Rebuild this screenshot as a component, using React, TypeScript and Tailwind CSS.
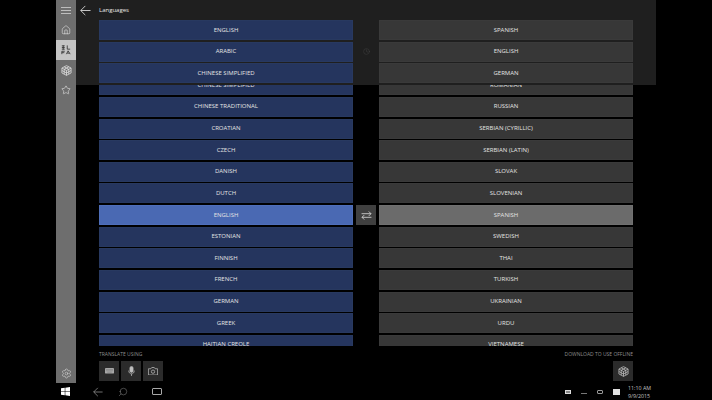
import { Clock, Home, Search, Settings, Star } from 'lucide-react';

const sourceLanguages = [
  'CHINESE SIMPLIFIED',
  'CHINESE TRADITIONAL',
  'CROATIAN',
  'CZECH',
  'DANISH',
  'DUTCH',
  'ENGLISH',
  'ESTONIAN',
  'FINNISH',
  'FRENCH',
  'GERMAN',
  'GREEK',
  'HAITIAN CREOLE',
];

const targetLanguages = [
  'ROMANIAN',
  'RUSSIAN',
  'SERBIAN (CYRILLIC)',
  'SERBIAN (LATIN)',
  'SLOVAK',
  'SLOVENIAN',
  'SPANISH',
  'SWEDISH',
  'THAI',
  'TURKISH',
  'UKRAINIAN',
  'URDU',
  'VIETNAMESE',
];

function LanguageRow({
  label,
  side,
  selected = false,
}: {
  label: string;
  side: 'source' | 'target';
  selected?: boolean;
}) {
  let tone = 'bg-[#25355e] border-[#283960]';
  if (side === 'target') tone = 'bg-[#373737] border-[#3a3a3a]';
  if (side === 'source' && selected) tone = 'bg-[#4a69b3] border-[#4f6fba]';
  if (side === 'target' && selected) tone = 'bg-[#6b6b6b] border-[#707070]';

  return (
    <div
      className={`flex h-5 w-[254px] shrink-0 items-center justify-center border text-[6px] text-[#e4e4e4] ${tone}`}
    >
      {label}
    </div>
  );
}

function LanguageList({
  items,
  side,
  selectedItem,
}: {
  items: string[];
  side: 'source' | 'target';
  selectedItem: string;
}) {
  return (
    <div className="flex flex-col gap-[1.64px]">
      {items.map((item) => (
        <LanguageRow
          key={item}
          label={item}
          side={side}
          selected={item === selectedItem}
        />
      ))}
    </div>
  );
}

function TranslateGlyph() {
  return (
    <svg viewBox="0 0 12 12" className="h-[10px] w-[10px] text-[#333]" fill="none" stroke="currentColor" strokeWidth="1">
      <path d="M1 1h3.500M1 3h3.500M1 5h3.500M2.700.500v5M7.500.500v4.500h3.500M1 11V7.500h3.500M1 9.200h3M6.500 11 8.500 7l2.500 4M7.500 9.800h2.500" />
    </svg>
  );
}

function CubeGlyph({ size = 11 }: { size?: number }) {
  return (
    <svg viewBox="0 0 12 12" width={size} height={size} fill="none" stroke="currentColor" strokeWidth="0.800">
      <path d="M6 .700 11 3.300v5.400L6 11.300 1 8.700V3.300zM1 3.300 6 6l5-2.700M6 6v5.300M3.500 2 8.500 4.700v5.300M8.500 2 3.500 4.700v5.300M1 6l5 2.700L11 6" />
    </svg>
  );
}

function BackArrow({ size, strokeWidth }: { size: number; strokeWidth: number }) {
  return (
    <svg viewBox="0 0 12 12" width={size} height={size} fill="none" stroke="currentColor" strokeWidth={strokeWidth}>
      <path d="M11.500 6H.800M5.800 1 .800 6l5 5" />
    </svg>
  );
}

function SwapGlyph() {
  return (
    <svg viewBox="0 0 12 10" width="11" height="9" fill="none" stroke="currentColor" strokeWidth="0.900">
      <path d="M.500 3h10.500M8.500.500 11 3 8.500 5.500M11.500 7H1M3.500 4.500 1 7l2.500 2.500" />
    </svg>
  );
}

function KeyboardGlyph() {
  return (
    <svg viewBox="0 0 10 6" width="9" height="5.500">
      <rect width="10" height="6" rx="0.500" fill="#a8a8a8" />
      <path d="M1 1.500h8M1 3h8M2.500 4.600h5" stroke="#6e6e6e" strokeWidth="0.500" />
    </svg>
  );
}

function MicGlyph() {
  return (
    <svg viewBox="0 0 8 12" width="7" height="10.500" fill="none" stroke="#bdbdbd" strokeWidth="0.800">
      <rect x="2.200" y="0.500" width="3.600" height="6.800" rx="1.800" fill="#bdbdbd" />
      <path d="M.800 5.200c0 5 6.400 5 6.400 0M4 9v2.500" />
    </svg>
  );
}

function CameraGlyph() {
  return (
    <svg viewBox="0 0 12 10" width="10" height="8.500" fill="none" stroke="#bdbdbd" strokeWidth="0.900">
      <path d="M.500 2h3l1-1.500h3l1 1.500h3v7.500H.500z" />
      <circle cx="6" cy="5.500" r="2" />
    </svg>
  );
}

function WindowsLogo() {
  return (
    <svg viewBox="0 0 10 10" className="h-[9px] w-[9px] fill-white">
      <path d="M0 1.400 4.200.800v3.900H0zM4.800.700 10 0v4.700H4.800zM0 5.300h4.200v3.900L0 8.600zM4.800 5.300H10V10l-5.200-.700z" />
    </svg>
  );
}

function SideButton({ children, active = false }: { children: React.ReactNode; active?: boolean }) {
  return (
    <div className={`flex h-5 w-5 items-center justify-center ${active ? 'bg-[#c4c4c4]' : ''}`}>
      {children}
    </div>
  );
}

function ToolButton({ children }: { children: React.ReactNode }) {
  return <div className="flex h-5 w-5 items-center justify-center bg-[#2b2b2b] text-[#c8c8c8]">{children}</div>;
}

export default function App() {
  return (
    <div className="flex h-[400px] w-[712px] flex-col overflow-hidden bg-black font-['Open_Sans',sans-serif]">
      <div className="flex h-[383px] pl-14">
        <aside className="flex w-5 flex-col justify-between bg-[#6e6e6e] text-[#e8e8e8]">
          <div className="flex flex-col">
            <SideButton>
              <div className="flex w-[10px] flex-col gap-[2px]">
                <div className="h-px bg-[#bdbdbd]" />
                <div className="h-px bg-[#bdbdbd]" />
                <div className="h-px bg-[#bdbdbd]" />
              </div>
            </SideButton>
            <SideButton>
              <Home size={10} strokeWidth={1.400} />
            </SideButton>
            <SideButton active>
              <TranslateGlyph />
            </SideButton>
            <SideButton>
              <CubeGlyph />
            </SideButton>
            <SideButton>
              <Star size={10} strokeWidth={1.400} />
            </SideButton>
          </div>
          <SideButton>
            <Settings size={11} strokeWidth={1.100} />
          </SideButton>
        </aside>

        <main className="relative flex w-[580px] flex-col">
          <div className="mt-[85px] flex h-[261px] overflow-hidden pl-[23px]">
            <div className="-mt-[9.700px]">
              <LanguageList items={sourceLanguages} side="source" selectedItem="ENGLISH" />
            </div>
            <div className="flex w-[26px] shrink-0 justify-center pt-[120px]">
              <div className="flex h-5 w-5 items-center justify-center bg-[#404040] text-[#dcdcdc]">
                <SwapGlyph />
              </div>
            </div>
            <div className="-mt-[9.700px]">
              <LanguageList items={targetLanguages} side="target" selectedItem="SPANISH" />
            </div>
          </div>

          <div className="flex justify-between px-[23px] pt-[4px]">
            <div className="flex flex-col gap-[3px]">
              <div className="h-[8px] text-[5px] leading-[8px] text-[#8c8c8c]">TRANSLATE USING</div>
              <div className="flex gap-[2px]">
                <ToolButton>
                  <KeyboardGlyph />
                </ToolButton>
                <ToolButton>
                  <MicGlyph />
                </ToolButton>
                <ToolButton>
                  <CameraGlyph />
                </ToolButton>
              </div>
            </div>
            <div className="flex flex-col items-end gap-[3px]">
              <div className="h-[8px] text-[5px] leading-[8px] text-[#8c8c8c]">DOWNLOAD TO USE OFFLINE</div>
              <ToolButton>
                <CubeGlyph />
              </ToolButton>
            </div>
          </div>

          {/* recent languages panel sits over the scrolling lists */}
          <div className="absolute left-0 top-0 h-[85px] w-[580px] bg-[#1f1f1f]">
            <div className="flex h-5 items-center text-[#e8e8e8]">
              <div className="flex w-[23px] items-center pl-[4px]">
                <BackArrow size={11} strokeWidth={0.900} />
              </div>
              <span className="text-[6px]">Languages</span>
            </div>
            <div className="flex pl-[23px]">
              <div className="flex flex-col gap-[1.500px]">
                <LanguageRow label="ENGLISH" side="source" />
                <LanguageRow label="ARABIC" side="source" />
                <LanguageRow label="CHINESE SIMPLIFIED" side="source" />
              </div>
              <div className="flex w-[26px] shrink-0 items-center justify-center text-[#4a4a4a]">
                <Clock size={7} strokeWidth={1.300} />
              </div>
              <div className="flex flex-col gap-[1.500px]">
                <LanguageRow label="SPANISH" side="target" />
                <LanguageRow label="ENGLISH" side="target" />
                <LanguageRow label="GERMAN" side="target" />
              </div>
            </div>
          </div>
        </main>
      </div>

      <footer className="flex h-[17px] items-center text-[#a8a8a8]">
        <div className="flex w-[136px] items-center">
          <div className="flex w-[76px] justify-end pr-[4px]">
            <WindowsLogo />
          </div>
          <div className="flex w-[40px] justify-center pl-[8px]">
            <BackArrow size={10} strokeWidth={0.800} />
          </div>
          <div className="-ml-[3px] flex w-[26px] justify-center">
            <Search size={10} strokeWidth={1} className="-scale-x-100" />
          </div>
        </div>
        <div className="ml-[16px] h-[7px] w-[10px] rounded-[1px] border border-[#a8a8a8]" />
        <div className="ml-[403px] flex items-center gap-[10px]">
          <div className="h-[4px] w-[6px] border border-[#dcdcdc] bg-[#dcdcdc]/60" />
          <div className="h-[5px] w-[6px] border-b border-[#777]" />
          <div className="h-[4px] w-[6px] rounded-[1px] border border-[#999]" />
          <div className="h-[6px] w-[7px] bg-[#e0e0e0]" />
        </div>
        <div className="ml-[8px] flex flex-col items-start text-[5.300px] leading-[8px] text-[#c0c0c0]">
          <span>11:10 AM</span>
          <span>9/9/2015</span>
        </div>
      </footer>
    </div>
  );
}
